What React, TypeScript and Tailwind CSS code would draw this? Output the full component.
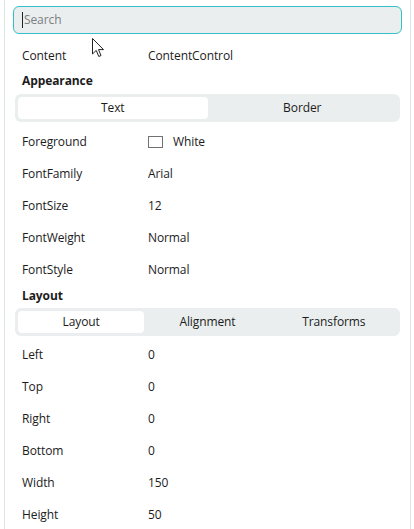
import React from "react";

type Prop = { label: string; value: React.ReactNode };

const appearanceRows: Prop[] = [
  {
    label: "Foreground",
    value: (
      <span className="flex items-center gap-[10px]">
        <span className="h-[12px] w-[15px] border border-[#6f7373] bg-white" />
        <span>White</span>
      </span>
    ),
  },
  { label: "FontFamily", value: "Arial" },
  { label: "FontSize", value: "12" },
  { label: "FontWeight", value: "Normal" },
  { label: "FontStyle", value: "Normal" },
];

const layoutRows: Prop[] = [
  { label: "Left", value: "0" },
  { label: "Top", value: "0" },
  { label: "Right", value: "0" },
  { label: "Bottom", value: "0" },
  { label: "Width", value: "150" },
  { label: "Height", value: "50" },
];

function Row({ label, value }: Prop) {
  return (
    <div className="flex h-[32px] items-center">
      <div className="w-[126px] shrink-0">{label}</div>
      <div>{value}</div>
    </div>
  );
}

function Tabs({ items, active }: { items: string[]; active: number }) {
  return (
    <div className="flex h-[28px] rounded-[6px] bg-[#eaeeee] p-[3px]">
      {items.map((t, i) => (
        <div
          key={t}
          className={`flex flex-1 items-center justify-center rounded-[4px] ${
            i === active ? "bg-white" : ""
          }`}
        >
          {t}
        </div>
      ))}
    </div>
  );
}

export default function App() {
  return (
    <div className="relative h-[529px] w-[414px] overflow-hidden bg-white font-['Open_Sans',sans-serif] text-[12px] tracking-[-0.1px] text-[#1c1c1c]">
      <div className="ml-[4px] h-full w-[407px] border-x border-[#dde5e5] px-[8px] pt-[6px]">
        {/* search */}
        <div className="flex h-[28px] items-center rounded-[6px] border border-[#35c0c8] bg-[#eaeeee] px-[8px]">
          <span className="mr-[1px] h-[16px] w-px bg-[#222]" />
          <span className="text-[#7b8080]">Search</span>
        </div>

        <div className="mt-[7px] px-[9px]">
          <div className="flex h-[30px] items-center">
            <div className="w-[126px] shrink-0">Content</div>
            <div>ContentControl</div>
          </div>
          <div className="flex h-[20px] items-center font-bold">Appearance</div>
        </div>
        <div className="mt-[3px] px-[2px]">
          <Tabs items={["Text", "Border"]} active={0} />
        </div>
        <div className="mt-[4px] px-[9px]">
          {appearanceRows.map((r) => (
            <Row key={r.label} {...r} />
          ))}
          <div className="flex h-[20px] items-center font-bold">Layout</div>
        </div>
        <div className="mt-[2px] px-[2px]">
          <Tabs items={["Layout", "Alignment", "Transforms"]} active={0} />
        </div>
        <div className="mt-[3px] px-[9px]">
          {layoutRows.map((r) => (
            <Row key={r.label} {...r} />
          ))}
        </div>
      </div>

      {/* mouse pointer */}
      <svg
        className="absolute left-[92px] top-[38px]"
        width="13"
        height="20"
        viewBox="0 0 13 20"
      >
        <path
          d="M0.5 0.5 L0.5 16 L4.2 12.4 L6.8 18.5 L9 17.5 L6.5 11.6 L11.5 11.6 Z"
          fill="white"
          stroke="#222"
          strokeWidth="1"
          strokeLinejoin="miter"
        />
      </svg>
    </div>
  );
}
